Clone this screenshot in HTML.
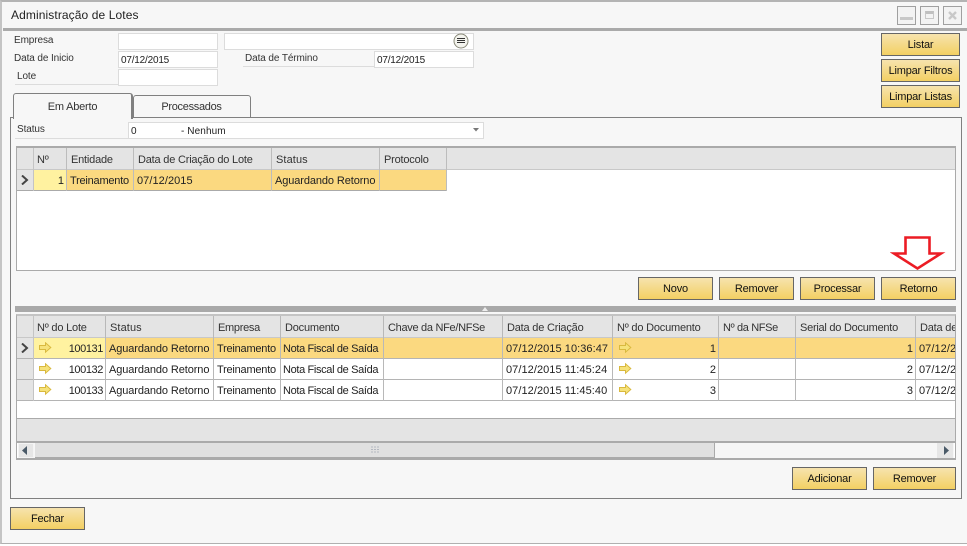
<!DOCTYPE html>
<html><head><meta charset="utf-8"><style>
html,body{margin:0;padding:0;background:#fff}
#w{position:relative;width:967px;height:546px;overflow:hidden;background:#fff;font:11px "Liberation Sans",sans-serif;color:#222}
#w div{position:absolute;box-sizing:border-box}
.t{white-space:nowrap;line-height:14px;height:14px;letter-spacing:.06px;margin-top:1px}
.h{color:#333;letter-spacing:-.2px}
.lb{color:#333;font-size:10px;letter-spacing:-.1px}
.iv{font-size:10px;letter-spacing:-.2px}
.r{text-align:right}
.tr{letter-spacing:-.22px}
.nf{letter-spacing:-.35px}
.ag{letter-spacing:-.1px}
.n{letter-spacing:-.4px}
.inp{background:#fff;border:1px solid #dcdcdc;height:17px}
.b{background:linear-gradient(#f6e3ae,#f3d063);border:1px solid #666;text-align:center;line-height:22px;height:23px;color:#111;letter-spacing:-.2px}
.c{background:#e4e4e4;border-right:1px solid #c8c8c8}
.l{background:#aaa}
.wb{width:19px;height:19px;border:1px solid #a0a0a0;top:6px;background:#f3f3f3}
</style></head><body><div id="w">
<div style="left:0;top:0;width:967px;height:544px;background:#f7f7f7;border-top:2px solid #b4b4b4;border-left:2px solid #c4c4c4;border-bottom:1px solid #b0b0b0"></div>
<div style="left:3px;top:28px;width:964px;height:3px;background:#aaa"></div>
<div class="t" style="left:11px;top:8px;margin:0;font-size:12px;line-height:15px;height:15px;letter-spacing:.1px;color:#222">Administração de Lotes</div>

<div class="wb" style="left:897px"><div style="left:2px;top:10px;width:13px;height:3px;background:#c8c8c8"></div></div>
<div class="wb" style="left:920px"><div style="left:4px;top:4px;width:9px;height:8px;border:1px solid #c8c8c8;border-top:3px solid #c0c0c0"></div></div>
<div class="wb" style="left:943px"><svg style="position:absolute;left:3px;top:3px" width="11" height="11"><path d="M2 2L9 9M9 2L2 9" stroke="#c8c8c8" stroke-width="2.4" fill="none"/></svg></div>

<div class="t lb" style="left:14px;top:33px">Empresa</div>
<div class="inp" style="left:118px;top:33px;width:100px"></div>
<div class="inp" style="left:224px;top:33px;width:250px"></div>
<svg style="position:absolute;left:453px;top:33px" width="16" height="16"><circle cx="8" cy="8" r="7" fill="#f4f4ee" stroke="#8a8a7a"/><path d="M4 5.500h8M4 7.500h8M4 9.500h8" stroke="#333" stroke-width="1"/></svg>
<div class="t lb" style="left:14px;top:51px">Data de Inicio</div>
<div class="inp" style="left:118px;top:51px;width:100px"></div>
<div class="t iv" style="left:121px;top:53px">07/12/2015</div>
<div style="left:243px;top:66px;width:131px;height:1px;background:#dcdcdc"></div>
<div class="t lb" style="left:245px;top:51px">Data de Término</div>
<div class="inp" style="left:374px;top:51px;width:100px"></div>
<div class="t iv" style="left:377px;top:53px">07/12/2015</div>
<div style="left:15px;top:84px;width:103px;height:1px;background:#dcdcdc"></div>
<div class="t lb" style="left:17px;top:69px">Lote</div>
<div class="inp" style="left:118px;top:69px;width:100px"></div>

<div class="b" style="left:881px;top:33px;width:79px">Listar</div>
<div class="b" style="left:881px;top:59px;width:79px">Limpar Filtros</div>
<div class="b" style="left:881px;top:85px;width:79px">Limpar Listas</div>

<div style="left:10px;top:117px;width:952px;height:382px;border:1px solid #808080;background:#f7f7f7"></div>
<div style="left:133px;top:95px;width:118px;height:23px;background:#f7f7f7;border:1px solid #808080;border-radius:3px 3px 0 0"></div>
<div class="t h" style="left:133px;top:99px;width:117px;text-align:center;letter-spacing:-.3px">Processados</div>
<div style="left:13px;top:93px;width:120px;height:26px;background:#f7f7f7;border:1px solid #808080;border-bottom:0;border-right:2px solid #808080;border-radius:3px 3px 0 0"></div>
<div class="t h" style="left:13px;top:99px;width:119px;text-align:center">Em Aberto</div>

<div class="t lb" style="left:17px;top:122px">Status</div>
<div style="left:15px;top:138px;width:113px;height:1px;background:#dcdcdc"></div>
<div class="inp" style="left:128px;top:122px;width:356px"></div>
<div class="t iv" style="left:131px;top:124px">0</div>
<div class="t iv" style="left:181px;top:124px;letter-spacing:.1px">- Nenhum</div>
<svg style="position:absolute;left:473px;top:128px" width="7" height="5"><path d="M0 0H6L3 3.500Z" fill="#777"/></svg>

<!-- grid 1 -->
<div style="left:16px;top:146px;width:940px;height:125px;background:#fff;border:1px solid #aaa;border-top:2px solid #aaa"></div>
<div class="c" style="left:17px;top:148px;width:938px;height:21px;border:0"></div>
<div class="l" style="left:17px;top:169px;width:938px;height:1px;background:#c8c8c8"></div>
<div class="c" style="left:17px;top:170px;width:16px;height:20px;border:0"></div>
<div style="left:33px;top:170px;width:33px;height:20px;background:#fff2a0"></div>
<div style="left:66px;top:170px;width:381px;height:20px;background:#fbd980"></div>
<div style="left:17px;top:190px;width:430px;height:1px;background:#aaa"></div>
<div style="left:33px;top:148px;width:1px;height:43px;background:#c4c4c4"></div>
<div style="left:66px;top:148px;width:1px;height:43px;background:#bcbcbc"></div>
<div style="left:133px;top:148px;width:1px;height:43px;background:#bcbcbc"></div>
<div style="left:271px;top:148px;width:1px;height:43px;background:#bcbcbc"></div>
<div style="left:379px;top:148px;width:1px;height:43px;background:#bcbcbc"></div>
<div style="left:446px;top:148px;width:1px;height:43px;background:#bcbcbc"></div>
<div class="t h" style="left:37px;top:152px">Nº</div>
<div class="t h" style="left:71px;top:152px">Entidade</div>
<div class="t h" style="left:138px;top:152px">Data de Criação do Lote</div>
<div class="t h" style="left:276px;top:152px;letter-spacing:.1px">Status</div>
<div class="t h" style="left:384px;top:152px">Protocolo</div>
<svg style="position:absolute;left:21px;top:175px" width="8" height="10"><path d="M1 .5L6 5L1 9.500" fill="none" stroke="#444" stroke-width="2"/></svg>
<div class="t r" style="left:33px;top:173px;width:31px">1</div>
<div class="t tr" style="left:70px;top:173px">Treinamento</div>
<div class="t" style="left:137px;top:173px">07/12/2015</div>
<div class="t ag" style="left:275px;top:173px">Aguardando Retorno</div>

<div class="b" style="left:638px;top:277px;width:75px">Novo</div>
<div class="b" style="left:719px;top:277px;width:75px">Remover</div>
<div class="b" style="left:800px;top:277px;width:75px">Processar</div>
<div class="b" style="left:881px;top:277px;width:75px">Retorno</div>
<svg style="position:absolute;left:890px;top:235px" width="56" height="38"><path d="M15.500 2.500H39.500V18.500H51L27.500 33.500L4 18.500H15.500Z" fill="none" stroke="#ec1c24" stroke-width="2.600"/></svg>

<div style="left:15px;top:306px;width:941px;height:6px;background:#a9a9a9"></div>
<svg style="position:absolute;left:482px;top:307px" width="7" height="4"><path d="M0 4L3 0L6 4Z" fill="#eee"/></svg>

<!-- grid 2 -->
<div style="left:16px;top:314px;width:940px;height:146px;background:#fff;border:1px solid #aaa;border-top:2px solid #c4c4c4;border-bottom:2px solid #aaa"></div>
<div class="c" style="left:17px;top:316px;width:938px;height:21px;border:0"></div>
<div style="left:17px;top:337px;width:938px;height:1px;background:#c8c8c8"></div>
<div class="c" style="left:17px;top:338px;width:16px;height:81px;border:0"></div>
<div style="left:33px;top:338px;width:72px;height:20px;background:#fff2a0"></div>
<div style="left:105px;top:338px;width:850px;height:20px;background:#fbd980"></div>
<div style="left:17px;top:358px;width:938px;height:1px;background:#b4b4b4"></div>
<div style="left:17px;top:379px;width:938px;height:1px;background:#b4b4b4"></div>
<div style="left:17px;top:400px;width:938px;height:1px;background:#b4b4b4"></div>
<div style="left:33px;top:316px;width:1px;height:85px;background:#c4c4c4"></div>
<div style="left:105px;top:316px;width:1px;height:85px;background:#b8b8b8"></div>
<div style="left:213px;top:316px;width:1px;height:85px;background:#b8b8b8"></div>
<div style="left:280px;top:316px;width:1px;height:85px;background:#b8b8b8"></div>
<div style="left:383px;top:316px;width:1px;height:85px;background:#b8b8b8"></div>
<div style="left:502px;top:316px;width:1px;height:85px;background:#b8b8b8"></div>
<div style="left:612px;top:316px;width:1px;height:85px;background:#b8b8b8"></div>
<div style="left:718px;top:316px;width:1px;height:85px;background:#b8b8b8"></div>
<div style="left:795px;top:316px;width:1px;height:85px;background:#b8b8b8"></div>
<div style="left:915px;top:316px;width:1px;height:85px;background:#b8b8b8"></div>

<div class="t h" style="left:37px;top:320px">Nº do Lote</div>
<div class="t h" style="left:110px;top:320px;letter-spacing:.1px">Status</div>
<div class="t h" style="left:218px;top:320px;letter-spacing:-.3px">Empresa</div>
<div class="t h" style="left:285px;top:320px">Documento</div>
<div class="t h" style="left:388px;top:320px;letter-spacing:-.3px">Chave da NFe/NFSe</div>
<div class="t h" style="left:507px;top:320px">Data de Criação</div>
<div class="t h" style="left:617px;top:320px">Nº do Documento</div>
<div class="t h" style="left:723px;top:320px;letter-spacing:-.35px">Nº da NFSe</div>
<div class="t h" style="left:800px;top:320px;letter-spacing:-.25px">Serial do Documento</div>
<div class="t h" style="left:920px;top:320px;width:35px;overflow:hidden">Data de</div>

<svg style="position:absolute;left:21px;top:343px" width="8" height="10"><path d="M1 .5L6 5L1 9.500" fill="none" stroke="#444" stroke-width="2"/></svg>

<svg style="position:absolute;left:39px;top:342px" width="13" height="12"><path d="M.5 3.500H6.500V.8L11.800 5.500L6.500 10.200V7.500H.5Z" fill="#f6e27a" stroke="#d9b93f"/></svg>
<svg style="position:absolute;left:39px;top:363px" width="13" height="12"><path d="M.5 3.500H6.500V.8L11.800 5.500L6.500 10.200V7.500H.5Z" fill="#f6e27a" stroke="#d9b93f"/></svg>
<svg style="position:absolute;left:39px;top:384px" width="13" height="12"><path d="M.5 3.500H6.500V.8L11.800 5.500L6.500 10.200V7.500H.5Z" fill="#f6e27a" stroke="#d9b93f"/></svg>
<svg style="position:absolute;left:619px;top:342px" width="13" height="12"><path d="M.5 3.500H6.500V.8L11.800 5.500L6.500 10.200V7.500H.5Z" fill="#f6e27a" stroke="#d9b93f"/></svg>
<svg style="position:absolute;left:619px;top:363px" width="13" height="12"><path d="M.5 3.500H6.500V.8L11.800 5.500L6.500 10.200V7.500H.5Z" fill="#f6e27a" stroke="#d9b93f"/></svg>
<svg style="position:absolute;left:619px;top:384px" width="13" height="12"><path d="M.5 3.500H6.500V.8L11.800 5.500L6.500 10.200V7.500H.5Z" fill="#f6e27a" stroke="#d9b93f"/></svg>

<div class="t r n" style="left:53px;top:341px;width:50px">100131</div>
<div class="t ag" style="left:109px;top:341px">Aguardando Retorno</div>
<div class="t tr" style="left:217px;top:341px">Treinamento</div>
<div class="t nf" style="left:283px;top:341px">Nota Fiscal de Saída</div>
<div class="t" style="left:506px;top:341px">07/12/2015 10:36:47</div>
<div class="t r" style="left:640px;top:341px;width:76px">1</div>
<div class="t r" style="left:840px;top:341px;width:73px">1</div>
<div class="t" style="left:919px;top:341px;width:36px;overflow:hidden">07/12/2015</div>

<div class="t r n" style="left:53px;top:362px;width:50px">100132</div>
<div class="t ag" style="left:109px;top:362px">Aguardando Retorno</div>
<div class="t tr" style="left:217px;top:362px">Treinamento</div>
<div class="t nf" style="left:283px;top:362px">Nota Fiscal de Saída</div>
<div class="t" style="left:506px;top:362px">07/12/2015 11:45:24</div>
<div class="t r" style="left:640px;top:362px;width:76px">2</div>
<div class="t r" style="left:840px;top:362px;width:73px">2</div>
<div class="t" style="left:919px;top:362px;width:36px;overflow:hidden">07/12/2015</div>

<div class="t r n" style="left:53px;top:383px;width:50px">100133</div>
<div class="t ag" style="left:109px;top:383px">Aguardando Retorno</div>
<div class="t tr" style="left:217px;top:383px">Treinamento</div>
<div class="t nf" style="left:283px;top:383px">Nota Fiscal de Saída</div>
<div class="t" style="left:506px;top:383px">07/12/2015 11:45:40</div>
<div class="t r" style="left:640px;top:383px;width:76px">3</div>
<div class="t r" style="left:840px;top:383px;width:73px">3</div>
<div class="t" style="left:919px;top:383px;width:36px;overflow:hidden">07/12/2015</div>

<div style="left:17px;top:401px;width:938px;height:17px;background:#fff"></div>
<div style="left:17px;top:418px;width:938px;height:1px;background:#aaa"></div>
<div style="left:17px;top:419px;width:938px;height:22px;background:#e4e4e4"></div>
<div style="left:17px;top:441px;width:938px;height:2px;background:#aaa"></div>
<div style="left:18px;top:443px;width:936px;height:15px;background:#f6f6f6"></div>
<div style="left:18px;top:443px;width:16px;height:15px;background:#e6e6e6;border:1px solid #f4f4f4"></div>
<svg style="position:absolute;left:21px;top:445px" width="7" height="11"><path d="M1 5.500L6 1V10Z" fill="#4a5a68"/></svg>
<div style="left:35px;top:443px;width:680px;height:15px;background:#e0e0e0;border-right:1px solid #aaa;border-bottom:1px solid #aaa"></div>
<svg style="position:absolute;left:370px;top:446px" width="10" height="8"><path d="M1 1h2M4 1h2M7 1h2M1 3.500h2M4 3.500h2M7 3.500h2M1 6h2M4 6h2M7 6h2" stroke="#b4b8c0" stroke-width="1"/></svg>
<div style="left:937px;top:443px;width:16px;height:15px;background:#e6e6e6"></div>
<svg style="position:absolute;left:943px;top:445px" width="7" height="11"><path d="M1 1L6 5.500L1 10Z" fill="#4a5a68"/></svg>

<div class="b" style="left:792px;top:467px;width:75px">Adicionar</div>
<div class="b" style="left:873px;top:467px;width:83px">Remover</div>
<div class="b" style="left:10px;top:507px;width:75px">Fechar</div>
</div></body></html>
